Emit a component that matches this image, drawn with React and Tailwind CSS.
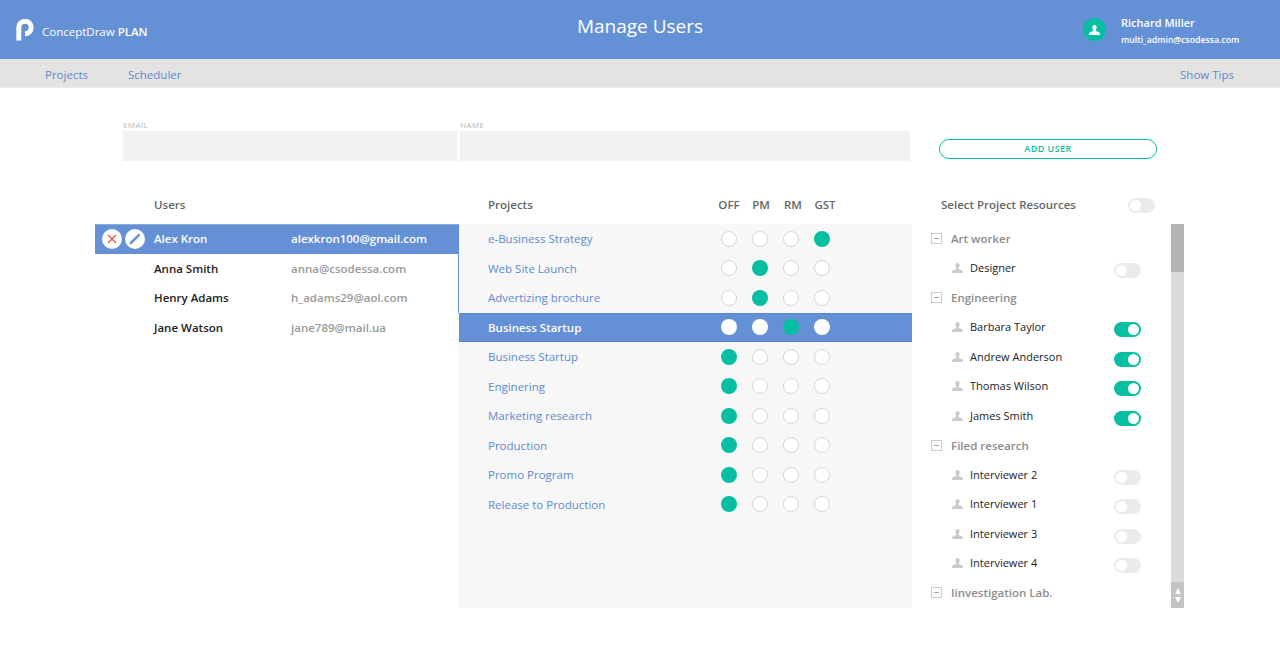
const users = [
  { name: "Anna Smith", email: "anna@csodessa.com" },
  { name: "Henry Adams", email: "h_adams29@aol.com" },
  { name: "Jane Watson", email: "jane789@mail.ua" },
];

const projects = [
  { name: "e-Business Strategy", role: 3 },
  { name: "Web Site Launch", role: 1 },
  { name: "Advertizing brochure", role: 1 },
  { name: "Business Startup", role: 2, active: true },
  { name: "Business Startup", role: 0 },
  { name: "Enginering", role: 0 },
  { name: "Marketing research", role: 0 },
  { name: "Production", role: 0 },
  { name: "Promo Program", role: 0 },
  { name: "Release to Production", role: 0 },
];

const resources = [
  { group: "Art worker", items: [{ name: "Designer" }] },
  {
    group: "Engineering",
    items: [
      { name: "Barbara Taylor", on: true },
      { name: "Andrew Anderson", on: true },
      { name: "Thomas Wilson", on: true },
      { name: "James Smith", on: true },
    ],
  },
  {
    group: "Filed research",
    items: [
      { name: "Interviewer 2" },
      { name: "Interviewer 1" },
      { name: "Interviewer 3" },
      { name: "Interviewer 4" },
    ],
  },
  { group: "Iinvestigation Lab.", items: [] },
];

const Logo = () => (
  <svg viewBox="0 0 18 22" className="w-[18px] h-[22px]">
    <path d="M2.8 21.5 V8.5 A6.2 6.2 0 1 1 9 14.7" fill="none" stroke="#fff" strokeWidth="5" />
  </svg>
);

const Person = ({ color = "#cccccc", className = "w-[11px] h-[10px]" }) => (
  <svg viewBox="0 0 12 11" className={className}>
    <path
      fill={color}
      d="M6 0 C7.6 0 8.4 1.2 8.4 2.6 C8.4 3.8 7.9 4.8 7.4 5.4 L7.4 6.6 C9 7.2 11.6 7.6 12 9 L12 11 L0 11 L0 9 C0.4 7.6 3 7.2 4.6 6.6 L4.6 5.4 C4.1 4.8 3.6 3.8 3.6 2.6 C3.6 1.2 4.4 0 6 0 Z"
    />
  </svg>
);

const Toggle = ({ on }) => (
  <div
    className={`w-[27px] h-[15px] rounded-full flex items-center px-[2px] ${
      on ? "bg-[#06bfa2] justify-end" : "bg-[#ebebeb] justify-start"
    }`}
  >
    <div className="w-[11px] h-[11px] rounded-full bg-white" />
  </div>
);

const Dot = ({ filled, active }) => {
  let cls = "bg-white border border-[#d6d6d6]";
  if (filled) cls = "bg-[#06bfa2]";
  else if (active) cls = "bg-white";
  return <div className={`w-4 h-4 rounded-full ${cls}`} />;
};

const App = () => {
  return (
    <div className="w-[1280px] h-[645px] overflow-hidden bg-white font-['Open_Sans',sans-serif] text-[11.5px]">
      <header className="h-[59px] bg-[#6490d6] grid grid-cols-[1fr_auto_1fr] items-center text-white">
        <div className="flex items-center pl-4">
          <Logo />
          <span className="ml-2 mt-[4px]">
            ConceptDraw <span className="font-semibold">PLAN</span>
          </span>
        </div>
        <h1 className="text-[19px] pb-[6px]">Manage Users</h1>
        <div className="w-[197px] justify-self-end flex items-center">
          <div className="w-[23px] h-[23px] rounded-full bg-[#06bfa2] flex items-center justify-center">
            <Person color="#fff" className="w-[11px] h-[10px]" />
          </div>
          <div className="ml-[15px] mt-[5px]">
            <div className="text-[11px] font-semibold leading-4">Richard Miller</div>
            <div className="text-[8.7px] font-semibold leading-[18px]">multi_admin@csodessa.com</div>
          </div>
        </div>
      </header>

      <nav className="h-[29px] pt-[3px] bg-[#e4e3e1] flex items-center pl-[45px] pr-[46px] text-[#5e8ad0] border-b border-[#ececec]">
        <a>Projects</a>
        <a className="ml-10">Scheduler</a>
        <a className="ml-auto">Show Tips</a>
      </nav>

      <section className="flex items-end pl-[123px] mt-[31px]">
        <div className="w-[334px]">
          <label className="block text-[8px] leading-3 tracking-wider text-[#b5b5b5]">EMAIL</label>
          <div className="h-[30px] bg-[#f2f2f2]" />
        </div>
        <div className="w-[450px] ml-[3px]">
          <label className="block text-[8px] leading-3 tracking-wider text-[#b5b5b5]">NAME</label>
          <div className="h-[30px] bg-[#f2f2f2]" />
        </div>
        <button className="w-[218px] h-5 ml-[29px] mb-[2px] rounded-full border border-[#06bfa2] bg-white text-[#06bfa2] text-[9px] font-semibold tracking-wider">
          ADD USER
        </button>
      </section>

      <main className="flex pl-[95px] mt-[33px]">
        <div className="w-[364px]">
          <div className="h-[30px] pb-2 pl-[59px] flex items-center font-semibold text-[#666]">Users</div>
          <div className="h-[29.5px] pb-px bg-[#6490d6] border-t border-[#8aabe0] flex items-center font-semibold text-white">
            <div className="w-[59px] flex items-center pl-[7px] gap-[3px]">
              <div className="w-5 h-5 rounded-full bg-white flex items-center justify-center">
                <svg viewBox="0 0 10 10" className="w-[10px] h-[10px]">
                  <path d="M1 1 L9 9 M9 1 L1 9" stroke="#e8483f" strokeWidth="1.2" fill="none" />
                </svg>
              </div>
              <div className="w-5 h-5 rounded-full bg-white flex items-center justify-center">
                <svg viewBox="0 0 12 12" className="w-3 h-3">
                  <path d="M0.5 11.5 L1.2 8.8 L9.8 0.6 L11.4 2.2 L3 10.8 Z" fill="#6490d6" />
                </svg>
              </div>
            </div>
            <div className="w-[137px]">Alex Kron</div>
            <div>alexkron100@gmail.com</div>
          </div>
          {users.map((user, i) => (
            <div
              key={user.name}
              className={`h-[29.5px] flex items-center font-semibold ${i < 2 ? "border-r border-[#6490d6]" : ""}`}
            >
              <div className="w-[137px] ml-[59px] text-[#222]">{user.name}</div>
              <div className="text-[#999]">{user.email}</div>
            </div>
          ))}
        </div>

        <div className="w-[453px]">
          <div className="h-[30px] pb-2 flex items-center font-semibold text-[#666]">
            <div className="w-[255px] pl-[29px]">Projects</div>
            <div className="w-[32px] text-center -ml-[1px]">OFF</div>
            <div className="w-[32px] text-center">PM</div>
            <div className="w-[32px] text-center">RM</div>
            <div className="w-[32px] text-center">GST</div>
          </div>
          <div className="h-[384px] bg-[#f7f7f7]">
            {projects.map((project, i) => (
              <div
                key={i}
                className={`h-[29.5px] flex items-center ${
                  project.active
                    ? "bg-[#6490d6] text-white font-semibold border-y border-[#5a85cb]"
                    : "text-[#5e8ad0]"
                }`}
              >
                <div className="w-[262px] pl-[29px]">{project.name}</div>
                <div className="flex gap-[15px]">
                  {[0, 1, 2, 3].map((col) => (
                    <Dot key={col} filled={project.role === col} active={project.active} />
                  ))}
                </div>
              </div>
            ))}
          </div>
        </div>

        <div className="w-[272px]">
          <div className="h-[30px] pb-2 flex items-center pl-[29px] pr-[29px] justify-between font-semibold text-[#666]">
            <span>Select Project Resources</span>
            <Toggle />
          </div>
          <div className="h-[384px] flex">
            <div className="w-[259px] overflow-hidden">
              {resources.map((res) => (
                <div key={res.group}>
                  <div className="h-[29.5px] flex items-center pl-[19px] font-semibold text-[#8c8c8c]">
                    <div className="w-[11px] h-[11px] border border-[#cccccc] flex items-center justify-center">
                      <div className="w-[5px] h-px bg-[#a8a8a8]" />
                    </div>
                    <span className="ml-[9px]">{res.group}</span>
                  </div>
                  {res.items.map((item) => (
                    <div key={item.name} className="h-[29.5px] flex items-center pl-[40px] text-[11px] text-[#222]">
                      <Person />
                      <span className="ml-[7px] flex-1">{item.name}</span>
                      <div className="mr-[30px] mt-[5px]">
                        <Toggle on={item.on} />
                      </div>
                    </div>
                  ))}
                </div>
              ))}
            </div>
            <div className="w-[13px] bg-[#dbdbdb] flex flex-col">
              <div className="h-[48px] bg-[#b5b5b5]" />
              <div className="mt-auto h-[26px] bg-[#c4c4c4] flex flex-col items-center justify-center gap-[3px]">
                <div className="w-0 h-0 border-x-[3.5px] border-x-transparent border-b-[6px] border-b-white" />
                <div className="w-0 h-0 border-x-[3.5px] border-x-transparent border-t-[6px] border-t-white" />
              </div>
            </div>
          </div>
        </div>
      </main>
    </div>
  );
};

export default App;
